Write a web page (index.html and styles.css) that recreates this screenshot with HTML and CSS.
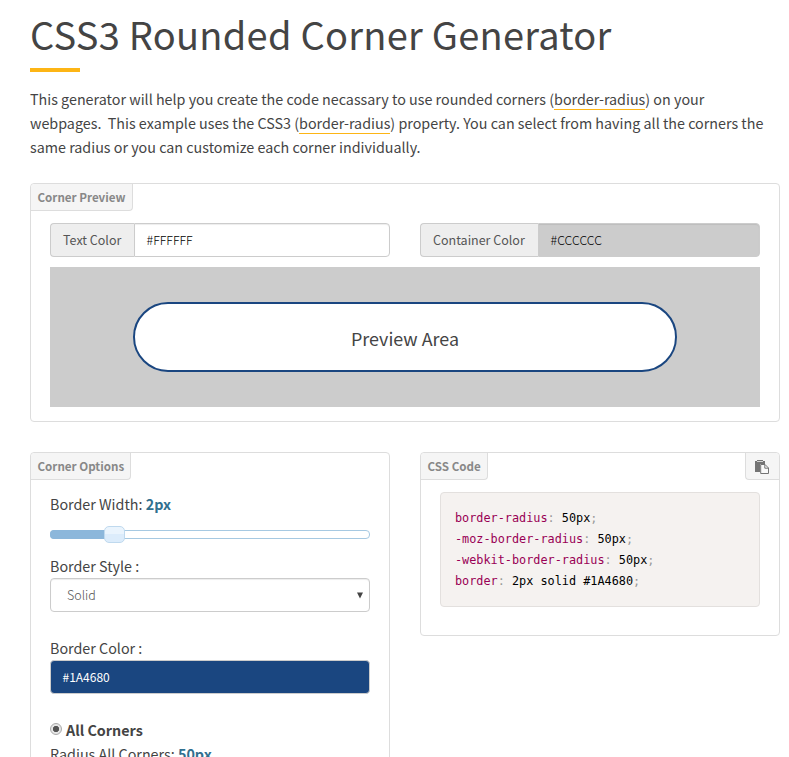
FILE: index.html
```html
<!DOCTYPE html>
<html lang="en">
<head>
<meta charset="utf-8">
<title>CSS3 Rounded Corner Generator</title>
<link rel="stylesheet" href="styles.css">
</head>
<body>
<main class="page">
  <h1 class="title">CSS3 Rounded Corner Generator</h1>
  <div class="rule"></div>
  <p class="intro">This generator will help you create the code necassary to use rounded corners (<a class="link">border-radius</a>) on your<br>webpages.&nbsp; This example uses the CSS3 (<a class="link">border-radius</a>) property. You can select from having all the corners the<br>same radius or you can customize each corner individually.</p>

  <section class="panel preview">
    <h2 class="tab tab-preview">Corner Preview</h2>
    <div class="fields">
      <div class="group"><span class="addon addon-text">Text Color</span><span class="value">#FFFFFF</span></div>
      <div class="group"><span class="addon addon-container">Container Color</span><span class="value value-grey">#CCCCCC</span></div>
    </div>
    <div class="stage"><div class="pill">Preview Area</div></div>
  </section>

  <div class="columns">
    <section class="panel options">
      <h2 class="tab tab-options">Corner Options</h2>
      <div class="options-body">
        <div class="label">Border Width: <b class="num">2px</b></div>
        <div class="slider"><div class="fill"></div><div class="handle"></div></div>
        <div class="label">Border Style :</div>
        <div class="select"><span>Solid</span><svg width="6" height="7" viewBox="0 0 6 7"><path d="M0 0.5H6L3 6.5Z" fill="#444"/></svg></div>
        <div class="label">Border Color :</div>
        <div class="color-input">#1A4680</div>
        <div class="choice"><span class="radio"></span><b>All Corners</b></div>
        <div class="label">Radius All Corners: <b class="num">50px</b></div>
      </div>
    </section>

    <section class="panel code">
      <div class="tabs">
        <h2 class="tab tab-code">CSS Code</h2>
        <div class="copy"><svg width="15" height="15" viewBox="0 0 15 15"><path fill="#747474" fill-rule="evenodd" d="M0 1H2V0H8V1H10V4H5.2V12H0ZM2 1.2V2H8V1.2Z"/><path d="M5.7 4.5H10L13.5 8V13.5H5.7Z" fill="#f9f9f9" stroke="#747474"/><path d="M9.8 4.5V8.2H13.5" fill="none" stroke="#747474"/></svg></div>
      </div>
      <pre class="snippet"><i>border-radius</i><s>:</s> 50px<s>;</s>
<i>-moz-border-radius</i><s>:</s> 50px<s>;</s>
<i>-webkit-border-radius</i><s>:</s> 50px<s>;</s>
<i>border</i><s>:</s> 2px solid #1A4680<s>;</s></pre>
    </section>
  </div>
</main>
</body>
</html>
```
FILE: styles.css
```css
* { box-sizing: border-box; }
html, body { margin: 0; height: 757px; overflow: hidden; background: #fff; }
body { font-family: "Noto Sans CJK SC", "Noto Sans", sans-serif; font-size: 14.32px; line-height: 24px; color: #444; }
.page { width: 750px; margin-left: 30px; }
.title { margin: 0; padding-top: 9px; height: 68px; font-size: 38px; line-height: 50px; font-weight: 400; letter-spacing: 0.25px; white-space: nowrap; }
.rule { width: 50px; height: 4px; background: #fdb515; }
.intro { margin: 15px 0 0; height: 72px; white-space: nowrap; }
.link { color: inherit; display: inline-block; height: 23px; line-height: 24px; border-bottom: 1px solid #fdb515; vertical-align: top; }
.panel { border: 1px solid #ddd; border-radius: 4px; }
.tab { margin: 0; height: 27px; padding-left: 6.5px; font-size: 11.6px; line-height: 26px; font-weight: 700; color: #888; background: #f5f5f5; border: solid #ddd; border-width: 0 1px 1px 0; border-radius: 4px 0 4px 0; white-space: nowrap; }
.tab-preview { width: 102px; }
.tab-options { width: 100px; }
.tab-code { width: 67px; }
.preview { margin-top: 24px; height: 239px; }
.fields { display: flex; gap: 30px; padding: 12px 19px 10px; }
.group { display: flex; width: 340px; height: 34px; font-size: 12.5px; line-height: 34px; }
.addon { padding-left: 12px; background: #eee; border: 1px solid #ccc; border-right: 0; border-radius: 4px 0 0 4px; color: #555; line-height: 32px; white-space: nowrap; }
.addon-text { width: 84px; }
.addon-container { width: 118px; }
.value { flex: 1; padding-left: 11.5px; border: 1px solid #ccc; border-radius: 0 4px 4px 0; box-shadow: inset 0 1px 1px rgba(0,0,0,.075); line-height: 32px; color: #000; font-size: 12.4px; font-weight: 300; }
.value-grey { background: #ccc; }
.stage { width: 710px; height: 140px; margin-left: 19px; padding-top: 35px; background: #ccc; }
.pill { width: 544px; height: 70px; margin-left: 83px; border: 2px solid #1a4680; border-radius: 50px; background: #fff; text-align: center; font-size: 17.9px; line-height: 68px; }
.columns { display: flex; gap: 30px; align-items: flex-start; margin-top: 30px; }
.options { width: 360px; height: 340px; }
.options-body { padding: 12px 19px; }
.slider { display: flex; align-items: center; width: 320px; height: 9px; margin: 14px 0 15px; border: 1px solid #a6c9e2; border-radius: 4px; }
.fill { width: 54px; height: 9px; background: #8cb7db; border-radius: 4px 0 0 4px; margin-left: -1px; }
.handle { width: 21px; height: 17px; border: 1px solid #bfd9ee; border-radius: 5px; background: linear-gradient(#eaf4fd 50%, #dcecfb 50%); }
.select { display: flex; justify-content: space-between; align-items: center; height: 34px; margin-bottom: 24px; padding: 0 6px 0 16px; border: 1px solid #ccc; border-radius: 4px; box-shadow: inset 0 1px 1px rgba(0,0,0,.075); font-size: 12.5px; font-weight: 300; color: #555; }
.color-input { height: 34px; padding-left: 11.5px; border: 1px solid #ccc; border-radius: 4px; background: #1a4680; color: #fff; font-size: 12px; line-height: 32px; }
.choice { display: flex; margin-top: 24px; }
.radio { width: 12px; height: 12px; margin: 5px 4px 0 0; border: 1px solid #aaa; border-radius: 50%; background: radial-gradient(circle, #555 0 2.8px, #e6e6e6 3.5px); }
.num { color: #31708f; }
.code { width: 360px; height: 184px; }
.tabs { display: flex; justify-content: space-between; }
.copy { width: 34px; height: 27px; padding: 7px 0 0 9px; background: #f5f5f5; border: solid #ddd; border-width: 0 0 1px 1px; border-radius: 0 4px 0 4px; line-height: 0; }
.snippet { width: 320px; height: 115px; margin: 12px 0 0 19px; padding: 15px 14px; background: #f5f2f0; border: 1px solid #e3e0de; border-radius: 4px; font-family: "DejaVu Sans Mono", monospace; font-size: 11.83px; line-height: 21px; color: #000; }
.snippet i { font-style: normal; color: #905; }
.snippet s { text-decoration: none; color: #999; }
```
